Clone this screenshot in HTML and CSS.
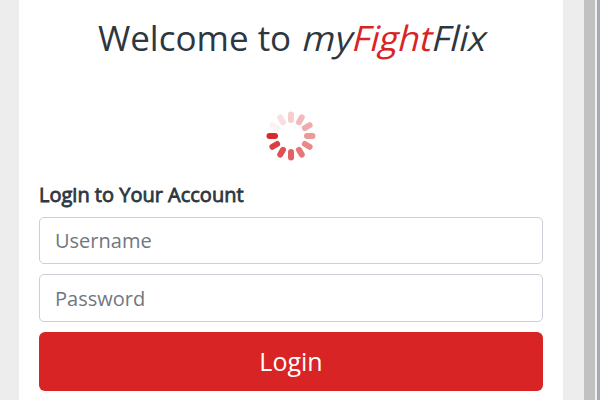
FILE: index.html
```html
<!DOCTYPE html>
<html lang="en">
<head>
<meta charset="utf-8">
<title>myFightFlix</title>
<link rel="stylesheet" href="styles.css">
</head>
<body>
<main class="panel">
  <h1 class="title">Welcome to <span class="brand">my<span class="accent">Fight</span>Flix</span></h1>
  <svg class="spinner" viewBox="-25 -25 50 50" aria-hidden="true">
    <g fill="#d82a2c">
      <rect x="-24.5" y="-3" width="11.5" height="6" rx="3"/>
      <rect x="-24.5" y="-3" width="11.5" height="6" rx="3" transform="rotate(330)" opacity=".9"/>
      <rect x="-24.5" y="-3" width="11.5" height="6" rx="3" transform="rotate(300)" opacity=".82"/>
      <rect x="-24.5" y="-3" width="11.5" height="6" rx="3" transform="rotate(270)" opacity=".74"/>
      <rect x="-24.5" y="-3" width="11.5" height="6" rx="3" transform="rotate(240)" opacity=".64"/>
      <rect x="-24.5" y="-3" width="11.5" height="6" rx="3" transform="rotate(210)" opacity=".56"/>
      <rect x="-24.5" y="-3" width="11.5" height="6" rx="3" transform="rotate(180)" opacity=".48"/>
      <rect x="-24.5" y="-3" width="11.5" height="6" rx="3" transform="rotate(150)" opacity=".4"/>
      <rect x="-24.5" y="-3" width="11.5" height="6" rx="3" transform="rotate(120)" opacity=".32"/>
      <rect x="-24.5" y="-3" width="11.5" height="6" rx="3" transform="rotate(90)" opacity=".23"/>
      <rect x="-24.5" y="-3" width="11.5" height="6" rx="3" transform="rotate(60)" opacity=".15"/>
      <rect x="-24.5" y="-3" width="11.5" height="6" rx="3" transform="rotate(30)" opacity=".06"/>
    </g>
  </svg>
  <form class="form">
    <h2 class="subtitle">Login to Your Account</h2>
    <input class="field" type="text" placeholder="Username">
    <input class="field field-password" type="password" placeholder="Password">
    <button class="submit" type="button">Login</button>
  </form>
</main>
<div class="scrollbar"></div>
</body>
</html>
```
FILE: styles.css
```css
* { box-sizing: border-box; }
body {
  margin: 0;
  height: 400px;
  overflow: hidden;
  display: flex;
  justify-content: space-between;
  background: #ededed;
  color: #2d3741;
  font-family: "Open Sans", sans-serif;
}
.panel {
  width: 544px;
  margin-left: 19px;
  padding: 13px 20px 0;
  background: #fff;
  display: flex;
  flex-direction: column;
}
.title {
  margin: 0;
  font-size: 35px;
  font-weight: 400;
  line-height: 49px;
  text-align: center;
  white-space: nowrap;
}
/* slants the upright letterforms around their baseline */
.brand {
  display: inline-block;
  transform: skewX(-14deg);
  transform-origin: 0 40px;
}
.accent { color: #d82424; }
.spinner {
  width: 50px;
  height: 50px;
  margin: 49px auto 0;
}
.form {
  margin-top: 21px;
  display: flex;
  flex-direction: column;
  gap: 10px;
}
.subtitle {
  margin: 0;
  font-size: 20px;
  font-weight: 400;
  line-height: 25px;
  -webkit-text-stroke: 0.8px currentColor;
}
.field {
  height: 47px;
  padding: 0 15px;
  border: 1px solid #cdced9;
  border-radius: 5px;
  font: 20px "Open Sans", sans-serif;
}
.field-password { height: 48px; }
.field::placeholder { color: #6f7780; opacity: 1; }
.submit {
  height: 59px;
  padding: 0 0 2px;
  border: 0;
  border-radius: 6px;
  background: #d82424;
  color: #fff;
  font: 25px "Open Sans", sans-serif;
}
.scrollbar {
  width: 16px;
  background: #c1c1c1;
  border-right: 3px solid #a5aab8;
  box-shadow: inset -2px 0 #f0f0f0;
}
```
